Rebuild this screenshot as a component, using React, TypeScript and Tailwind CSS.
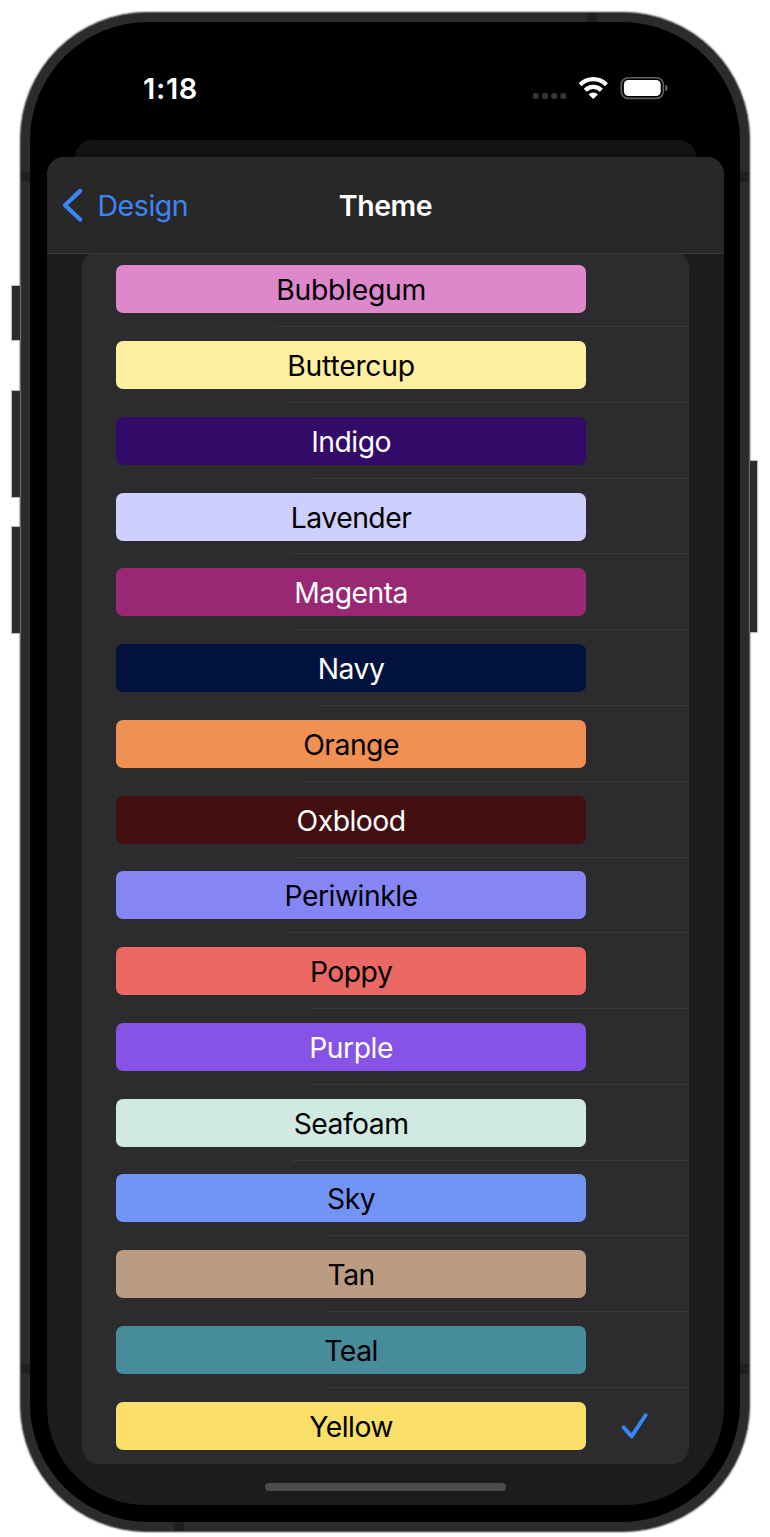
type Theme = { name: string; bg: string; text: string; tracking: string; inset: number };

const DARK = "text-black";
const LIGHT = "text-white";
const SNUG = "tracking-[-0.25px]";
const TIGHT = "tracking-[-0.5px]";

const themes: Theme[] = [
  { name: "Bubblegum", bg: "bg-[#de87cb]", text: DARK, tracking: SNUG, inset: 193 },
  { name: "Buttercup", bg: "bg-[#feee9f]", text: DARK, tracking: SNUG, inset: 204 },
  { name: "Indigo", bg: "bg-[#320a68]", text: LIGHT, tracking: TIGHT, inset: 228 },
  { name: "Lavender", bg: "bg-[#cecffc]", text: DARK, tracking: TIGHT, inset: 209 },
  { name: "Magenta", bg: "bg-[#982873]", text: LIGHT, tracking: TIGHT, inset: 211 },
  { name: "Navy", bg: "bg-[#01133c]", text: LIGHT, tracking: TIGHT, inset: 236 },
  { name: "Orange", bg: "bg-[#f09153]", text: DARK, tracking: TIGHT, inset: 220 },
  { name: "Oxblood", bg: "bg-[#430e0f]", text: LIGHT, tracking: TIGHT, inset: 214 },
  { name: "Periwinkle", bg: "bg-[#8585f5]", text: DARK, tracking: TIGHT, inset: 202 },
  { name: "Poppy", bg: "bg-[#ec6864]", text: DARK, tracking: TIGHT, inset: 227 },
  { name: "Purple", bg: "bg-[#8753e6]", text: LIGHT, tracking: TIGHT, inset: 226 },
  { name: "Seafoam", bg: "bg-[#d1e9e3]", text: DARK, tracking: TIGHT, inset: 210 },
  { name: "Sky", bg: "bg-[#7294f5]", text: DARK, tracking: TIGHT, inset: 245 },
  { name: "Tan", bg: "bg-[#bb9c82]", text: DARK, tracking: TIGHT, inset: 246 },
  { name: "Teal", bg: "bg-[#468c9b]", text: DARK, tracking: TIGHT, inset: 242 },
  { name: "Yellow", bg: "bg-[#fadf68]", text: DARK, tracking: TIGHT, inset: 0 },
];

function Hardware() {
  const button = "absolute bg-[#2b2b2b] shadow-[0_0_1px_1px_rgba(120,120,120,0.45)]";
  const band = "absolute bg-[#1f1f1f]";
  return (
    <>
      <i className={`${button} -left-[9px] top-[273px] h-[54px] w-[8px]`} />
      <i className={`${button} -left-[9px] top-[378px] h-[106px] w-[8px]`} />
      <i className={`${button} -left-[9px] top-[514px] h-[106px] w-[8px]`} />
      <i className={`${button} -right-[8px] top-[448px] h-[171px] w-[7px]`} />
      <i className={`${band} left-0 top-[159px] h-[10px] w-[9px]`} />
      <i className={`${band} right-0 top-[159px] h-[10px] w-[9px]`} />
      <i className={`${band} bottom-[157px] left-0 h-[10px] w-[9px]`} />
      <i className={`${band} bottom-[157px] right-0 h-[10px] w-[9px]`} />
      <i className={`${band} left-[566px] top-0 h-[9px] w-[10px]`} />
      <i className={`${band} bottom-0 left-[153px] h-[9px] w-[10px]`} />
    </>
  );
}

function StatusBar() {
  return (
    <div className="flex h-[118px] items-start justify-between pl-[113px] pr-[72px] pt-[49px]">
      <span className="text-[29px] font-semibold leading-9 tracking-[0.7px] text-white">1:18</span>
      <svg className="mt-[5px]" width="136" height="24" viewBox="0 0 136 24">
        <g fill="#333">
          <rect x="0.8" y="17" width="6" height="6" rx="1.8" />
          <rect x="10" y="17" width="6" height="6" rx="1.8" />
          <rect x="19.2" y="17" width="6" height="6" rx="1.8" />
          <rect x="28.3" y="17" width="6" height="6" rx="1.8" />
        </g>
        <g fill="none" stroke="#fff" strokeWidth="4.3">
          <path d="M48.2 8.7a18.4 18.4 0 0 1 26.2 0" />
          <path d="M53.2 14.3a11.4 11.4 0 0 1 16.2 0" />
        </g>
        <path d="M61.3 23l-4.7-4.6a6.6 6.6 0 0 1 9.4 0z" fill="#fff" />
        <rect x="89.3" y="1.8" width="42" height="20.6" rx="6.8" fill="none" stroke="#626262" strokeWidth="1.6" />
        <rect x="91.9" y="4" width="36.8" height="16" rx="4.6" fill="#fff" />
        <path d="M133.4 8.8c2.8 1 2.8 5.4 0 6.4z" fill="#777" />
      </svg>
    </div>
  );
}

function ThemeRow({ theme, selected }: { theme: Theme; selected: boolean }) {
  return (
    <li className="flex h-[75.78px] flex-col">
      <div className="flex flex-1 items-center pl-[34px]">
        <span
          className={`flex h-[48px] w-[470px] items-center justify-center rounded-[7px] pl-[1px] pt-[2.4px] text-[28.3px] ${theme.tracking} ${theme.bg} ${theme.text}`}
        >
          {theme.name}
        </span>
        {selected && (
          <svg className="ml-[35px]" width="28" height="28" viewBox="0 0 28 28">
            <path
              d="M2.7 15.4L10.6 24.4L24.6 3.2"
              fill="none"
              stroke="#3b86f7"
              strokeWidth="3.9"
              strokeLinecap="round"
              strokeLinejoin="round"
            />
          </svg>
        )}
      </div>
      {!selected && <div className="-mt-px h-px bg-[#38383a]" style={{ marginLeft: theme.inset }} />}
    </li>
  );
}

export default function App() {
  return (
    <div className="flex h-[1537px] w-[770px] justify-center overflow-hidden bg-white pt-[12px] font-['Inter',sans-serif]">
      <div className="relative h-[1520px] w-[730px] rounded-[127px] border border-[#666] bg-[#2b2b2b] p-[9px] shadow-[0_0_1px_1px_rgba(120,120,120,0.5)]">
        <Hardware />
        <div className="h-[1500px] w-[710px] rounded-[118px] bg-black">
          <StatusBar />
          <div className="ml-[45px] h-[17px] w-[621px] rounded-t-[17px] bg-[#131313]" />
          <div className="ml-[17px] flex h-[1348px] w-[677px] flex-col overflow-hidden rounded-b-[98px] rounded-t-[17px] bg-[#1c1c1e]">
            <header className="relative z-10 grid h-[97px] shrink-0 grid-cols-[1fr_auto_1fr] items-center border-b border-[#3a3a3b] bg-[#282828] pl-[15px] pr-[15px]">
              <div className="flex items-center text-[28.5px] tracking-[-0.45px] text-[#3b86f7]">
                <svg className="mr-[14px]" width="21" height="34" viewBox="0 0 21 34">
                  <path
                    d="M18.2 2.9L3 17.2L18.2 31.5"
                    fill="none"
                    stroke="#3b86f7"
                    strokeWidth="4.2"
                    strokeLinecap="round"
                    strokeLinejoin="round"
                  />
                </svg>
                <span className="pl-[0.5px] pt-[2px]">Design</span>
              </div>
              <h1 className="pt-[2px] text-[28.5px] font-semibold tracking-[-0.45px] text-white">Theme</h1>
            </header>
            <ul className="-mt-[2.6px] ml-[34.6px] w-[607.6px] shrink-0 rounded-[17px] bg-[#2c2c2e]">
              {themes.map((theme) => (
                <ThemeRow key={theme.name} theme={theme} selected={theme.name === "Yellow"} />
              ))}
            </ul>
            <div className="ml-[218px] mt-[19px] h-[8.6px] w-[241px] shrink-0 rounded-full bg-[#4c4c4c]" />
          </div>
        </div>
      </div>
    </div>
  );
}
